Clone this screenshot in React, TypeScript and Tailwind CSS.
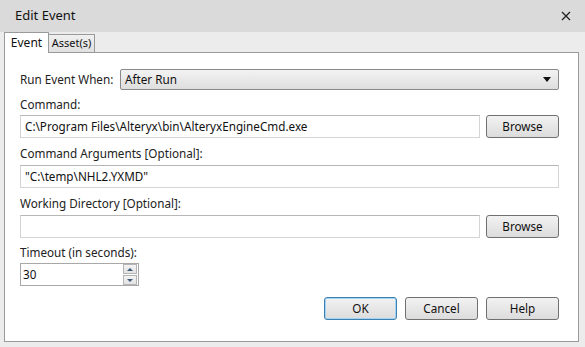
import React from 'react'

const font = { fontFamily: '"Noto Sans", "Open Sans", sans-serif' }

const Button = ({ label, primary }: { label: string; primary?: boolean }) => (
  <button
    className={`flex h-[23px] w-[73px] items-center justify-center rounded-[3px] border bg-gradient-to-b from-[#f2f2f2] to-[#dcdcdc] text-[11.7px] text-[#111] ${
      primary ? 'border-[#3c7fb1] shadow-[inset_0_0_0_1px_#a7d3f2]' : 'border-[#707070]'
    }`}
  >
    {label}
  </button>
)

const Input = ({ value, className = '' }: { value?: string; className?: string }) => (
  <div
    className={`flex h-[23px] items-center border border-[#d5d5d5] border-t-[#b7b7b7] bg-white px-[4px] text-[11.7px] text-[#111] ${className}`}
  >
    {value}
  </div>
)

const Label = ({ children }: { children: React.ReactNode }) => (
  <div className="text-[11.7px] leading-[16px] text-[#222]">{children}</div>
)

export default function App() {
  return (
    <div className="flex h-[347px] w-[585px] flex-col bg-[#ececec]" style={font}>
      {/* title bar */}
      <div className="flex h-[32px] items-center justify-between bg-[#dadada] pl-[15px] pr-[14px]">
        <span className="text-[13px] text-[#111]">Edit Event</span>
        <svg width="10" height="10" viewBox="0 0 10 10">
          <path d="M1 1 L9 9 M9 1 L1 9" stroke="#222" strokeWidth="1.3" />
        </svg>
      </div>

      {/* tabs */}
      <div className="flex h-[20px] items-end pl-[4px]">
        <div className="relative z-10 -mb-px flex h-[21px] w-[45px] items-center justify-center border border-b-0 border-[#9a9a9a] bg-white text-[12px] text-[#111]">
          Event
        </div>
        <div className="flex h-[18px] w-[46px] items-center justify-center border border-b-0 border-l-0 border-[#9a9a9a] bg-gradient-to-b from-[#f0f0f0] to-[#e0e0e0] text-[11px] text-[#111]">
          Asset(s)
        </div>
      </div>

      {/* panel */}
      <div className="ml-[4px] mr-[6px] flex h-[290px] flex-col border border-[#9a9a9a] bg-white pl-[15px] pr-[19px]">
        <div className="mt-[16px] flex h-[21px] items-center">
          <span className="w-[100px] text-[11.7px] text-[#222]">Run Event When:</span>
          <div className="flex h-[21px] flex-1 items-center justify-between rounded-[2px] border border-[#8a8a8a] bg-gradient-to-b from-[#f3f3f3] to-[#dedede] pl-[4px] pr-[7px] text-[11.7px] text-[#111]">
            After Run
            <svg width="8" height="5" viewBox="0 0 8 5">
              <path d="M0 0 H8 L4 5 Z" fill="#111" />
            </svg>
          </div>
        </div>

        <div className="mt-[6px]">
          <Label>Command:</Label>
        </div>
        <div className="mt-[3px] flex items-center">
          <Input value="C:\Program Files\Alteryx\bin\AlteryxEngineCmd.exe" className="flex-1" />
          <div className="ml-[6px]">
            <Button label="Browse" />
          </div>
        </div>

        <div className="mt-[7px]">
          <Label>Command Arguments [Optional]:</Label>
        </div>
        <div className="mt-[4px]">
          <Input value={'"C:\\temp\\NHL2.YXMD"'} />
        </div>

        <div className="mt-[7px]">
          <Label>Working Directory [Optional]:</Label>
        </div>
        <div className="mt-[4px] flex items-center">
          <Input className="flex-1" />
          <div className="ml-[6px]">
            <Button label="Browse" />
          </div>
        </div>

        <div className="mt-[6px]">
          <Label>Timeout (in seconds):</Label>
        </div>
        <div className="mt-[3px] flex h-[23px] w-[119px] items-center justify-between border border-[#a8a8a8] bg-white pl-[2px] pr-[1px] text-[11.7px] text-[#111]">
          30
          <div className="flex flex-col gap-px">
            <div className="flex h-[10px] w-[14px] items-center justify-center border border-[#b5b5b5] bg-gradient-to-b from-[#f4f4f4] to-[#e2e2e2]">
              <svg width="6" height="3" viewBox="0 0 6 3">
                <path d="M0 3 H6 L3 0 Z" fill="#3d5a78" />
              </svg>
            </div>
            <div className="flex h-[10px] w-[14px] items-center justify-center border border-[#b5b5b5] bg-gradient-to-b from-[#f4f4f4] to-[#e2e2e2]">
              <svg width="6" height="3" viewBox="0 0 6 3">
                <path d="M0 0 H6 L3 3 Z" fill="#3d5a78" />
              </svg>
            </div>
          </div>
        </div>

        <div className="mt-[11px] flex justify-end gap-[8px]">
          <Button label="OK" primary />
          <Button label="Cancel" />
          <Button label="Help" />
        </div>
      </div>
    </div>
  )
}
